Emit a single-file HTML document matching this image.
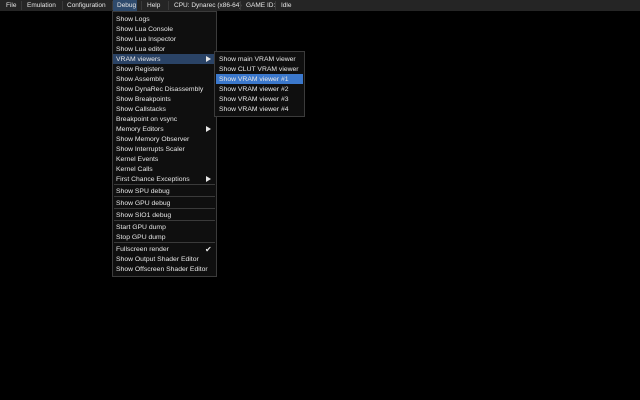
<!DOCTYPE html>
<html><head><meta charset="utf-8"><style>
*{margin:0;padding:0;box-sizing:border-box}
body{width:640px;height:400px;background:#000;position:relative;overflow:hidden;font-family:"Liberation Sans","DejaVu Sans",sans-serif;font-size:6.8px;color:#e6e6e6}
.bar{position:absolute;left:0;top:0;width:640px;height:11px;background:#252525}
.t{position:absolute;white-space:nowrap;line-height:10px;margin-top:1.5px}
.b{font-size:6.5px}
.vs{position:absolute;top:1px;width:1px;height:9px;background:#3a3a3a}
.menu{position:absolute;background:#0f0f0f;border:1px solid #3b3b3b}
.sep{position:absolute;height:1px;background:#3a3a3a}
.tri{position:absolute;width:0;height:0;border-top:3px solid transparent;border-bottom:3px solid transparent;border-left:5px solid #e6e6e6}
</style></head><body>
<div class="bar"></div>
<div style="position:absolute;left:113px;top:0;width:24px;height:11px;background:#2e4a6c"></div>
<div class="t b" style="left:6px;top:-0.5px">File</div><div class="vs" style="left:21px"></div>
<div class="t b" style="left:27px;top:-0.5px">Emulation</div><div class="vs" style="left:62px"></div>
<div class="t b" style="left:67px;top:-0.5px">Configuration</div><div class="vs" style="left:112px"></div>
<div class="t b" style="left:117px;top:-0.5px">Debug</div><div class="vs" style="left:141px"></div>
<div class="t b" style="left:147px;top:-0.5px">Help</div><div class="vs" style="left:168px"></div>
<div class="t b" style="left:174px;top:-0.5px">CPU: Dynarec (x86-64)</div><div class="vs" style="left:240px"></div>
<div class="t b" style="left:246px;top:-0.5px">GAME ID:</div><div class="vs" style="left:275px"></div>
<div class="t b" style="left:281px;top:-0.5px">Idle</div>

<div class="menu" style="left:112px;top:11px;width:105px;height:266px"></div>
<div style="position:absolute;left:113px;top:54px;width:103px;height:10px;background:#2a4366"></div>
<div class="t" style="left:116px;top:13px">Show Logs</div>
<div class="t" style="left:116px;top:23px">Show Lua Console</div>
<div class="t" style="left:116px;top:33px">Show Lua Inspector</div>
<div class="t" style="left:116px;top:43px">Show Lua editor</div>
<div class="t" style="left:116px;top:53.5px">VRAM viewers</div>
<div class="tri" style="left:206px;top:56px"></div>
<div class="t" style="left:116px;top:63px">Show Registers</div>
<div class="t" style="left:116px;top:73px">Show Assembly</div>
<div class="t" style="left:116px;top:83px">Show DynaRec Disassembly</div>
<div class="t" style="left:116px;top:93px">Show Breakpoints</div>
<div class="t" style="left:116px;top:103px">Show Callstacks</div>
<div class="t" style="left:116px;top:113px">Breakpoint on vsync</div>
<div class="t" style="left:116px;top:123px">Memory Editors</div>
<div class="tri" style="left:206px;top:126px"></div>
<div class="t" style="left:116px;top:133px">Show Memory Observer</div>
<div class="t" style="left:116px;top:143px">Show Interrupts Scaler</div>
<div class="t" style="left:116px;top:153px">Kernel Events</div>
<div class="t" style="left:116px;top:163px">Kernel Calls</div>
<div class="t" style="left:116px;top:173px">First Chance Exceptions</div>
<div class="tri" style="left:206px;top:176px"></div>
<div class="sep" style="left:114px;top:184px;width:101px"></div>
<div class="t" style="left:116px;top:185.5px">Show SPU debug</div>
<div class="sep" style="left:114px;top:196px;width:101px"></div>
<div class="t" style="left:116px;top:197.5px">Show GPU debug</div>
<div class="sep" style="left:114px;top:208px;width:101px"></div>
<div class="t" style="left:116px;top:209.5px">Show SIO1 debug</div>
<div class="sep" style="left:114px;top:220px;width:101px"></div>
<div class="t" style="left:116px;top:221.5px">Start GPU dump</div>
<div class="t" style="left:116px;top:231.5px">Stop GPU dump</div>
<div class="sep" style="left:114px;top:242px;width:101px"></div>
<div class="t" style="left:116px;top:243.5px">Fullscreen render</div>
<div class="t" style="left:205px;top:243.5px;font-size:8px">✔</div>
<div class="t" style="left:116px;top:253.5px">Show Output Shader Editor</div>
<div class="t" style="left:116px;top:263.5px">Show Offscreen Shader Editor</div>

<div class="menu" style="left:214px;top:51px;width:91px;height:66px"></div>
<div style="position:absolute;left:216px;top:74px;width:87px;height:10px;background:#3b78cc"></div>
<div class="t" style="left:219px;top:53.5px">Show main VRAM viewer</div>
<div class="t" style="left:219px;top:63.5px">Show CLUT VRAM viewer</div>
<div class="t" style="left:219px;top:73.5px">Show VRAM viewer #1</div>
<div class="t" style="left:219px;top:83.5px">Show VRAM viewer #2</div>
<div class="t" style="left:219px;top:93.5px">Show VRAM viewer #3</div>
<div class="t" style="left:219px;top:103.5px">Show VRAM viewer #4</div>
</body></html>
